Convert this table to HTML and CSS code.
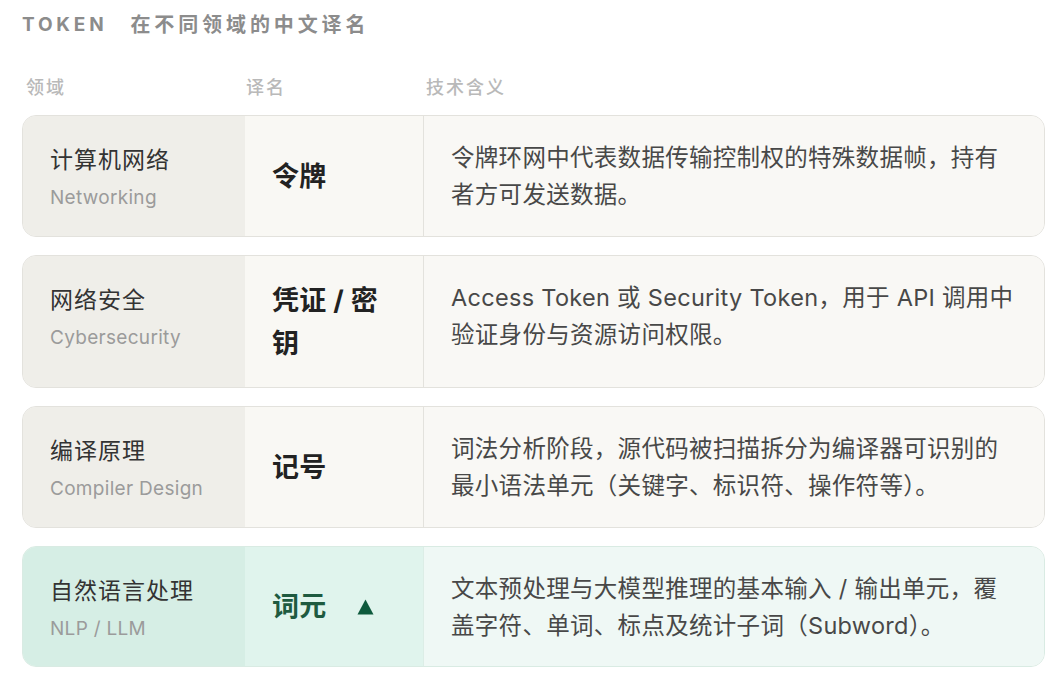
FILE: index.html
```html
<!DOCTYPE html>
<html lang="zh-CN">
<head>
<meta charset="utf-8">
<title>TOKEN 在不同领域的中文译名</title>
<link rel="stylesheet" href="styles.css">
</head>
<body>
<main class="page">
  <h1 class="heading"><span class="heading-en">TOKEN</span><span class="heading-zh">在不同领域的中文译名</span></h1>

  <div class="thead">
    <div>领域</div>
    <div>译名</div>
    <div>技术含义</div>
  </div>

  <div class="rows">
    <div class="row">
      <div class="cell domain">
        <div class="domain-zh">计算机网络</div>
        <div class="domain-en">Networking</div>
      </div>
      <div class="cell term">令牌</div>
      <div class="cell desc">令牌环网中代表数据传输控制权的特殊数据帧，持有者方可发送数据。</div>
    </div>

    <div class="row">
      <div class="cell domain">
        <div class="domain-zh">网络安全</div>
        <div class="domain-en">Cybersecurity</div>
      </div>
      <div class="cell term">凭证 / 密钥</div>
      <div class="cell desc">Access Token 或 Security Token，用于 API 调用中验证身份与资源访问权限。</div>
    </div>

    <div class="row">
      <div class="cell domain">
        <div class="domain-zh">编译原理</div>
        <div class="domain-en">Compiler Design</div>
      </div>
      <div class="cell term">记号</div>
      <div class="cell desc">词法分析阶段，源代码被扫描拆分为编译器可识别的最小语法单元（关键字、标识符、操作符等）。</div>
    </div>

    <div class="row row-active">
      <div class="cell domain">
        <div class="domain-zh">自然语言处理</div>
        <div class="domain-en">NLP / LLM</div>
      </div>
      <div class="cell term">词元<svg class="tri" width="17" height="16" viewBox="0 0 17 16" aria-hidden="true"><path d="M8.5 0.5 L16.5 15.5 L0.5 15.5 Z" fill="#0e5a3d"/></svg></div>
      <div class="cell desc">文本预处理与大模型推理的基本输入 / 输出单元，覆盖字符、单词、标点及统计子词（Subword）。</div>
    </div>
  </div>
</main>
</body>
</html>
```

FILE: styles.css
```css
* { box-sizing: border-box; }

html, body {
  margin: 0;
  padding: 0;
  background: #ffffff;
}

body {
  font-family: "Inter", "Noto Sans CJK SC", "Noto Sans", sans-serif;
  color: #333333;
}

.page {
  width: 1045px;
  padding: 10px 0 0 22px;
}

.heading {
  margin: 0;
  height: 30px;
  line-height: 30px;
  display: flex;
  align-items: center;
  color: #8c8c8c;
  font-weight: 700;
}

.heading-en {
  font-size: 19px;
  letter-spacing: 3.8px;
  margin-right: 23px;
}

.heading-zh {
  font-size: 20px;
  letter-spacing: 3.9px;
  font-weight: 600;
}

.thead {
  display: grid;
  grid-template-columns: 220px 180px 1fr;
  padding-left: 4px;
  margin-top: 36px;
  height: 24px;
  line-height: 24px;
  font-size: 18px;
  font-weight: 500;
  color: #b9b9b9;
  letter-spacing: 2px;
}

.rows {
  margin-top: 15px;
  display: flex;
  flex-direction: column;
  gap: 18px;
}

.row {
  display: grid;
  grid-template-columns: 222px 178px 1fr;
  border: 1px solid #e3e2dd;
  border-radius: 14px;
  overflow: hidden;
  background: #f9f8f5;
}

.cell {
  padding: 23px 27px 22.5px;
}

.domain {
  background: #efeee9;
  padding-top: 27px;
}

.domain-zh {
  font-size: 23px;
  line-height: 34px;
  color: #333333;
  letter-spacing: 1px;
}

.domain-en {
  margin-top: 8px;
  font-size: 19px;
  line-height: 26px;
  color: #9b9b9b;
  letter-spacing: 0.3px;
}

.term {
  background: #f9f8f4;
  font-size: 27px;
  line-height: 43px;
  font-weight: 700;
  color: #222222;
  letter-spacing: 0.3px;
  display: flex;
  flex-wrap: wrap;
  align-items: center;
  align-content: center;
}

.desc {
  background: #f9f8f5;
  border-left: 1px solid #e3e2dd;
  font-size: 23.5px;
  line-height: 37px;
  letter-spacing: 0.3px;
  color: #484848;
  padding-right: 27px;
}

.row-active {
  border-color: #d9ebe3;
}

.row-active .domain {
  background: #d6eee5;
}

.row-active .term {
  background: #e0f4ed;
  color: #1e5a40;
}

.row-active .desc {
  background: #eff8f5;
  border-left-color: #dcede6;
}

.tri {
  margin-left: 30px;
  display: block;
}
```
